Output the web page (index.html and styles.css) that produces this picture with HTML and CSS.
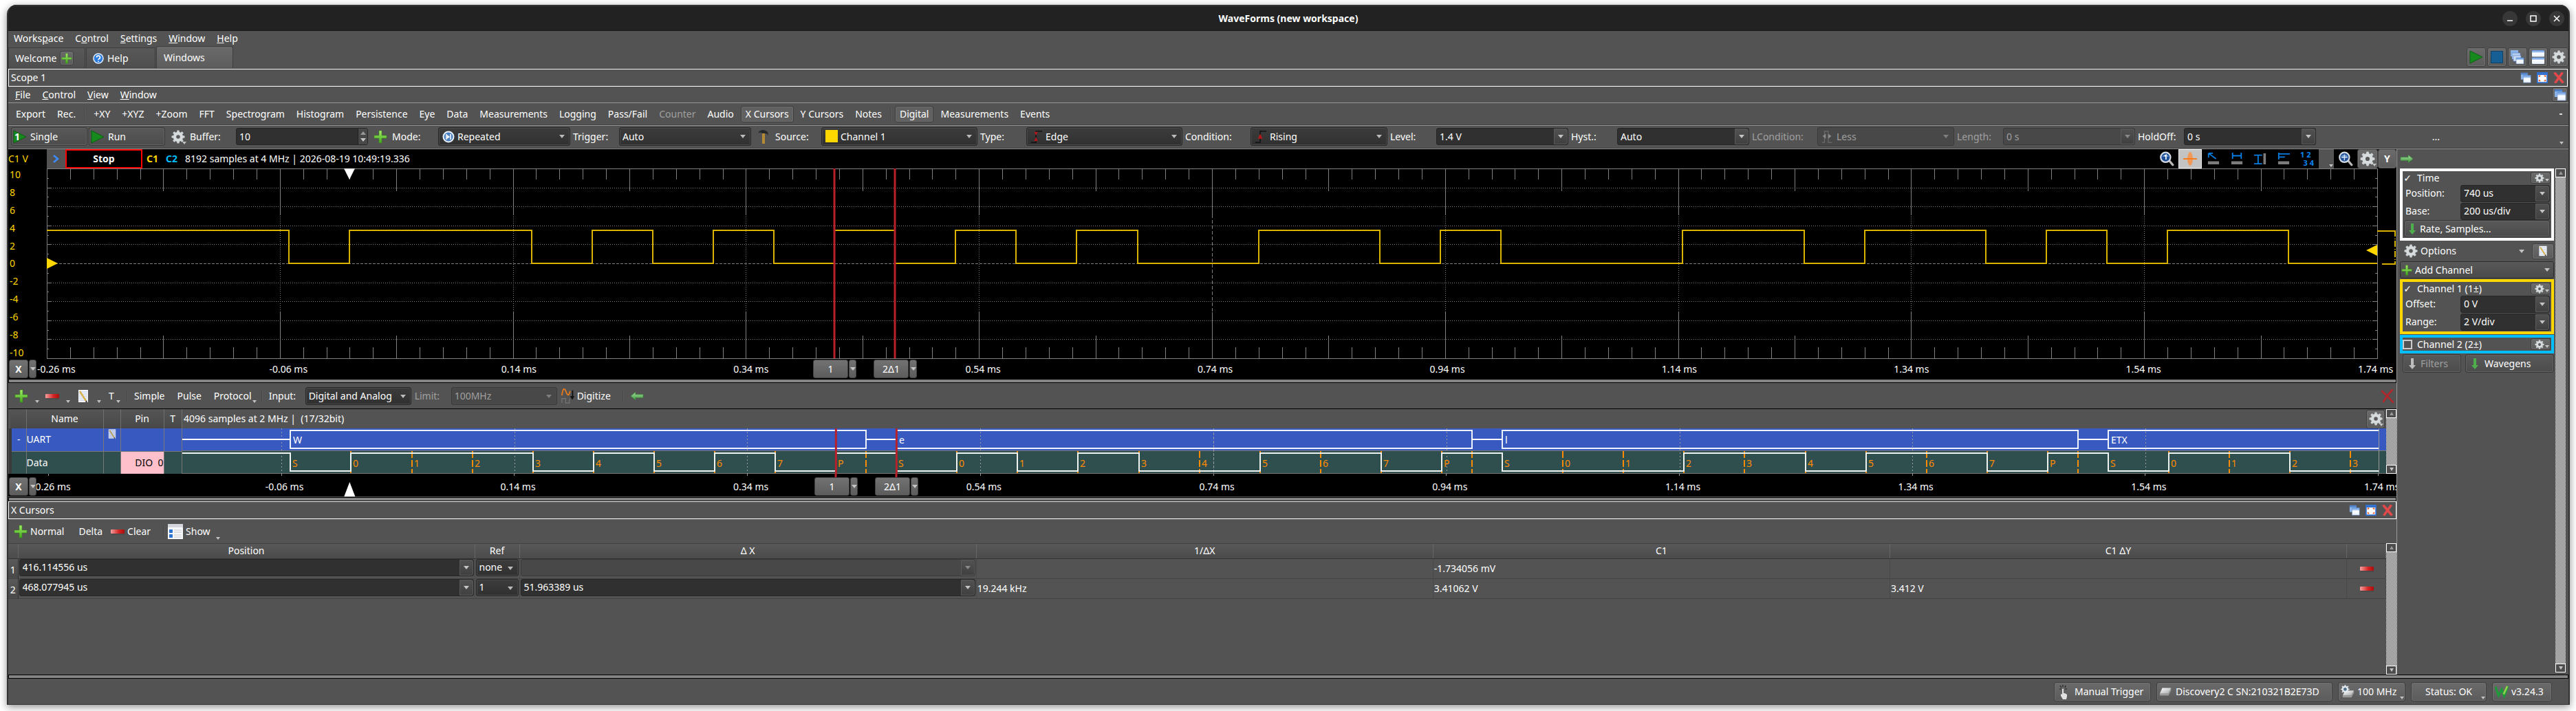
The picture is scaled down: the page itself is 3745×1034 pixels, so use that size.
FILE: index.html
```
<!DOCTYPE html>
<html lang="en">
<head>
    <meta charset="UTF-8">
    <meta name="viewport" content="width=device-width, initial-scale=1.0">
    <title>WaveForms (new workspace)</title>
    <link rel="stylesheet" href="styles.css">
</head>
<body>

<!-- Icon set -->
<svg class="defs" width="0" height="0" aria-hidden="true">
    <defs>
        <linearGradient id="gGreen" x1="0" y1="0" x2="0" y2="1"><stop offset="0" stop-color="#a6ef6a"/><stop offset="1" stop-color="#3fa51c"/></linearGradient>
        <linearGradient id="gRed" x1="0" y1="0" x2="1" y2="0"><stop offset="0" stop-color="#f6a0a0"/><stop offset=".6" stop-color="#d32222"/><stop offset="1" stop-color="#a80f0f"/></linearGradient>
        <linearGradient id="gBlue" x1="0" y1="0" x2="0" y2="1"><stop offset="0" stop-color="#5f93dc"/><stop offset=".35" stop-color="#b5d0f5"/><stop offset=".4" stop-color="#fff"/><stop offset="1" stop-color="#e6efff"/></linearGradient>
        <linearGradient id="gArrow" x1="0" y1="0" x2="0" y2="1"><stop offset="0" stop-color="#a5dfa0"/><stop offset="1" stop-color="#3f9a3c"/></linearGradient>
        <linearGradient id="gGrey" x1="0" y1="0" x2="1" y2="1"><stop offset="0" stop-color="#fff"/><stop offset="1" stop-color="#a3a8aa"/></linearGradient>
    </defs>
    <symbol id="plus" viewBox="0 0 20 20"><path d="M8 1h4v7h7v4h-7v7H8v-7H1V8h7z" fill="url(#gGreen)" stroke="#3c8a20" stroke-width=".6"/></symbol>
    <symbol id="minus" viewBox="0 0 20 20"><rect x="0" y="7" width="20" height="6" rx="1" fill="url(#gRed)"/><path d="M1 14h19" stroke="#333" stroke-opacity=".5"/></symbol>
    <symbol id="gear" viewBox="0 0 20 20"><g fill="#cdd2d4"><rect x="8.2" y=".5" width="3.6" height="19" rx="1"/><rect x="8.2" y=".5" width="3.6" height="19" rx="1" transform="rotate(45 10 10)"/><rect x="8.2" y=".5" width="3.6" height="19" rx="1" transform="rotate(90 10 10)"/><rect x="8.2" y=".5" width="3.6" height="19" rx="1" transform="rotate(135 10 10)"/></g><circle cx="10" cy="10" r="5" fill="#5a5a5a" stroke="#d6dbdd" stroke-width="4.400"/></symbol>
    <symbol id="note" viewBox="0 0 16 20"><path d="M1 1h14v18H1z" fill="#f4f6fb"/><path d="M2 4h12M2 7h12M2 10h12M2 13h12M2 16h12" stroke="#b9c9e6"/><path d="M3 3l9 14" stroke="#d8b24a" stroke-width="2.4"/><path d="M12 17l1 2" stroke="#333" stroke-width="2"/></symbol>
    <symbol id="zoomer" viewBox="0 0 20 20"><path d="M13 12l5 6" stroke="#b9b9b9" stroke-width="3" stroke-linecap="round"/><circle cx="8.500" cy="8" r="6.500" fill="#1f4f96" stroke="#d5dbe3" stroke-width="2"/><path d="M4 7a5 4 0 0 1 9 0z" fill="#6fa0dc"/></symbol>
    <symbol id="one" viewBox="0 0 20 20"><path d="M7 6.500L9 5v6" fill="none" stroke="#fff" stroke-width="1.500"/></symbol>
    <symbol id="fit" viewBox="0 0 20 20"><path d="M4.500 8h8M8.500 4v8" stroke="#cfe0f7" stroke-width="1.300"/></symbol>
    <symbol id="windows" viewBox="0 0 18 18"><rect x="1" y="1" width="11" height="11" fill="#8db4e8"/><rect x="1" y="1" width="11" height="3" fill="#4f82c8"/><rect x="5" y="5" width="12" height="12" fill="url(#gBlue)" stroke="#6d96d0" stroke-width=".6"/></symbol>
    <symbol id="cascade" viewBox="0 0 20 20"><rect x="0" y="0" width="11" height="9" fill="#8db4e8"/><rect x="2" y="4" width="12" height="9" fill="#b4cdf0" stroke="#5580c0" stroke-width=".6"/><rect x="4" y="8" width="11" height="8" fill="#cbdcf5" stroke="#5580c0" stroke-width=".6"/><rect x="8" y="11" width="11" height="9" fill="url(#gBlue)" stroke="#5580c0" stroke-width=".6"/></symbol>
    <symbol id="tile" viewBox="0 0 20 20"><rect x="1" y="0" width="18" height="9.500" rx="1" fill="url(#gBlue)"/><rect x="1" y="10.500" width="18" height="9.500" rx="1" fill="url(#gBlue)"/></symbol>
    <symbol id="maxi" viewBox="0 0 18 18"><rect x="1" y="1" width="16" height="16" fill="#fff" stroke="#2f6fd0" stroke-width="2"/><path d="M1 3h16" stroke="#2f6fd0" stroke-width="3"/><path d="M4 8V6h2M12 6h2v2M14 12v2h-2M6 14H4v-2" fill="none" stroke="#e2571c" stroke-width="1.600"/></symbol>
    <symbol id="cross" viewBox="0 0 18 18"><path d="M3 2l12 14M14 2L4 16" stroke="#e0484a" stroke-width="4" stroke-linecap="square"/></symbol>
    <symbol id="thinx" viewBox="0 0 20 20"><path d="M2 3c6 5 11 10 16 16M17 1C12 6 7 13 4 18" stroke="#b3262a" stroke-width="2.600" fill="none" stroke-linecap="round"/></symbol>
    <symbol id="play" viewBox="0 0 20 20"><path d="M1 1l18 9-18 9z" fill="#178a1e" stroke="#0d5f13"/></symbol>
    <symbol id="arrowR" viewBox="0 0 18 10"><path d="M1 3h10V0l6 5-6 5V7H1z" fill="url(#gArrow)" stroke="#3f9a3c" stroke-width=".5"/></symbol>
    <symbol id="arrowL" viewBox="0 0 18 10"><path d="M17 3H7V0L1 5l6 5V7h10z" fill="url(#gArrow)" stroke="#3f9a3c" stroke-width=".5"/></symbol>
    <symbol id="arrowD" viewBox="0 0 10 18"><path d="M3 1v10H0l5 6 5-6H7V1z" fill="currentColor"/></symbol>
    <symbol id="hammer" viewBox="0 0 16 22"><path d="M6 6h4v15H6z" fill="#b58a35"/><path d="M1 4c3-4 9-4 13 0l1 5c-2-3-4-3-5-3H6C4 4 3 4 1 6z" fill="#26292b"/></symbol>
    <symbol id="help" viewBox="0 0 16 16"><circle cx="8" cy="8" r="7" fill="#2c7bdc" stroke="#dbe9fb" stroke-width="1.600"/><path d="M5.500 6.500a2.500 2.300 0 1 1 3.500 2q-1 .5-1 1.500M8 11.500v1.500" fill="none" stroke="#fff" stroke-width="1.700"/></symbol>
    <symbol id="repeat" viewBox="0 0 18 18"><circle cx="9" cy="9" r="8.500" fill="#e8eff8"/><circle cx="9" cy="9" r="6.500" fill="#4a7fc0"/><path d="M6 5v8M12 5v8" stroke="#fff" stroke-width="1.500"/><path d="M7 6l4 3-4 3z" fill="#fff"/></symbol>
    <symbol id="edge" viewBox="0 0 20 20"><path d="M1 19h8V1h10" fill="none" stroke="#0b0b0b" stroke-width="1.500"/><path d="M6 2h6l-3 6zM6 17h6l-3-7z" fill="#b0181c"/></symbol>
    <symbol id="rising" viewBox="0 0 20 20"><path d="M1 19h8V1h10" fill="none" stroke="#0b0b0b" stroke-width="1.500"/><path d="M5 13h8L9 5z" fill="#b0181c"/></symbol>
    <symbol id="less" viewBox="0 0 20 20"><path d="M1 19h4V1h6v18h6" fill="none" stroke="#6c6c6c" stroke-width="1.300"/><path d="M2 9l5-4v8zM16 9l-5-4v8z" fill="#8b8b8b"/></symbol>
    <symbol id="digitize" viewBox="0 0 22 24"><path d="M1 11C3-2 5-2 8 6s5 3 6-2" fill="none" stroke="#e87b1d" stroke-width="2"/><path d="M1 23v-7h6v7h6v-7" fill="none" stroke="#777" stroke-width="1.200"/><path d="M18 3v10" stroke="#111" stroke-width="2"/><path d="M14 12h7l-3.500 6z" fill="#111"/></symbol>
    <symbol id="list" viewBox="0 0 22 22"><path d="M0 0h22v22H0z" fill="#f7f8fa"/><path d="M0 0h22v5H0z" fill="#d3d6da"/><path d="M2 8h5v5H2zM2 15h5v5H2z" fill="#2f74d0"/><path d="M9 9h11M9 12h11M9 16h11M9 19h11" stroke="#c5c8cc"/></symbol>
    <symbol id="hand" viewBox="0 0 16 22"><path d="M6 1v3M2 2l2 3M10 2L9 5M1 7h3M9 7h3" stroke="#222" stroke-width="1.200"/><path d="M5 7q1.200-1 2 0v6q3 0 5 2v3l-1 4H6l-3-5v-3l2 1z" fill="#e2e2e2"/></symbol>
    <symbol id="disk" viewBox="0 0 22 14"><path d="M5 1h14l-4 9H1z" fill="url(#gGrey)"/><path d="M1 10h14v3H1zM15 10l4-9v4l-4 8z" fill="#9b9b9b"/></symbol>
    <symbol id="clock" viewBox="0 0 22 22"><path d="M7 9h14l-4 8H3z" fill="url(#gGrey)"/><path d="M3 17h14v3H3zM17 17l4-8v4l-4 7z" fill="#9b9b9b"/><circle cx="7" cy="7" r="4" fill="#4f6f8a" stroke="#e3eaf0" stroke-width="2.600"/><path d="M7 0v3M7 11v3M0 7h3M11 7h3M2 2l2 2M12 2l-2 2M2 12l2-2M12 12l-2-2" stroke="#e3eaf0" stroke-width="1.600"/></symbol>
    <symbol id="wlogo" viewBox="0 0 22 20"><path d="M1 2l5 14 5-10 4 11 6-16" fill="none" stroke="#1d9a3a" stroke-width="3.400"/><path d="M14 14l6-13" stroke="#8fd14a" stroke-width="3"/></symbol>
    <symbol id="ptr" viewBox="0 0 20 20"><path d="M2 1l12 9M2 1v7M2 1h7" stroke="#0a7de0" stroke-width="2" fill="none"/><path d="M1 14h18v5H1z" fill="#7d7d7d"/></symbol>
    <symbol id="hcur" viewBox="0 0 20 20"><path d="M3 0v10M17 0v10M3 5h14" stroke="#0a7de0" stroke-width="2" fill="none"/><path d="M1 14h18v5H1z" fill="#7d7d7d"/></symbol>
    <symbol id="vcur" viewBox="0 0 20 20"><path d="M0 4h13M0 18h13M6.500 4v14" stroke="#0a7de0" stroke-width="2" fill="none"/><path d="M15 1h4v18h-4z" fill="#7d7d7d"/></symbol>
    <symbol id="fcur" viewBox="0 0 20 20"><path d="M2 0v11M2 2h18M2 7h10" stroke="#0a7de0" stroke-width="2" fill="none"/><path d="M1 14h18v5H1z" fill="#7d7d7d"/></symbol>
</svg>

<div class="window">

    <header class="titlebar">
        <h1>WaveForms (new workspace)</h1>
        <div class="wm-buttons">
            <button aria-label="Minimize"><svg viewBox="0 0 22 22"><path d="M7 14h8" stroke="#fff" stroke-width="1.500"/></svg></button>
            <button aria-label="Maximize"><svg viewBox="0 0 22 22"><path d="M7 7h8v8H7z" fill="none" stroke="#fff" stroke-width="1.500"/></svg></button>
            <button aria-label="Close"><svg viewBox="0 0 22 22"><path d="M7 7l8 8M15 7l-8 8" stroke="#fff" stroke-width="1.500"/></svg></button>
        </div>
    </header>

    <nav class="menu">
        <button>Works<u>p</u>ace</button>
        <button>C<u>o</u>ntrol</button>
        <button><u>S</u>ettings</button>
        <button><u>W</u>indow</button>
        <button><u>H</u>elp</button>
    </nav>

    <div class="tabs">
        <div class="tab tab-welcome"><span>Welcome</span><button class="tool-btn tab-add" aria-label="Add"><svg class="i16"><use href="#plus"/></svg></button></div>
        <button class="tab tab-help"><svg class="i16"><use href="#help"/></svg>Help</button>
        <button class="tab tab-active">Windows</button>
        <div class="tab-tools">
            <button class="tool-btn" aria-label="Run all"><svg class="i20"><use href="#play"/></svg></button>
            <button class="tool-btn" aria-label="Stop all"><span class="stop-icon"></span></button>
            <button class="tool-btn" aria-label="Cascade"><svg class="i20"><use href="#cascade"/></svg></button>
            <button class="tool-btn" aria-label="Tile"><svg class="i20"><use href="#tile"/></svg></button>
            <button class="tool-btn" aria-label="Settings"><svg class="i20"><use href="#gear"/></svg></button>
        </div>
    </div>

    <div class="dock-title">
        <h2>Scope 1</h2>
        <button aria-label="Undock"><svg class="i16"><use href="#windows"/></svg></button>
        <button aria-label="Maximize"><svg class="i16"><use href="#maxi"/></svg></button>
        <button aria-label="Close"><svg class="i16"><use href="#cross"/></svg></button>
    </div>

    <nav class="menu menu-scope">
        <button><u>F</u>ile</button>
        <button><u>C</u>ontrol</button>
        <button><u>V</u>iew</button>
        <button><u>W</u>indow</button>
        <button class="tool-btn undock" aria-label="Float"><svg class="i18"><use href="#windows"/></svg></button>
    </nav>

    <div class="toolbar view-bar">
        <button>Export</button>
        <button>Rec.</button>
        <i class="sep"></i>
        <button>+XY</button>
        <button>+XYZ</button>
        <button>+Zoom</button>
        <button>FFT</button>
        <button>Spectrogram</button>
        <button>Histogram</button>
        <button>Persistence</button>
        <button>Eye</button>
        <button>Data</button>
        <button>Measurements</button>
        <button>Logging</button>
        <button>Pass/Fail</button>
        <button disabled>Counter</button>
        <button>Audio</button>
        <button class="on">X Cursors</button>
        <button>Y Cursors</button>
        <button>Notes</button>
        <i class="sep"></i>
        <button class="on">Digital</button>
        <button>Measurements</button>
        <button>Events</button>
        <i class="more"></i>
    </div>

    <div class="toolbar trigger-bar">
        <button class="btn"><svg class="i20"><use href="#play"/></svg><b class="single">1</b>Single</button>
        <button class="btn"><svg class="i20"><use href="#play"/></svg>Run</button>
        <button class="flat" aria-label="Options"><svg class="i20"><use href="#gear"/></svg><i class="caret corner"></i></button>
        <label for="buffer">Buffer:</label>
        <span class="spin"><input id="buffer" value="10"><span class="arrows"><i class="caret up"></i><i class="caret"></i></span></span>
        <button class="flat" aria-label="Add buffer"><svg class="i20"><use href="#plus"/></svg></button>
        <label for="mode">Mode:</label>
        <span class="drop has-icon"><svg class="i18"><use href="#repeat"/></svg><select id="mode"><option>Repeated</option></select></span>
        <label for="trigger">Trigger:</label>
        <span class="drop"><select id="trigger"><option>Auto</option></select></span>
        <button class="flat" aria-label="Simple trigger"><svg class="i22"><use href="#hammer"/></svg></button>
        <label for="source">Source:</label>
        <span class="drop wide has-icon"><span class="swatch"></span><select id="source"><option>Channel 1</option></select></span>
        <label for="type">Type:</label>
        <span class="drop wide has-icon"><svg class="i18"><use href="#edge"/></svg><select id="type"><option>Edge</option></select></span>
        <label for="condition" class="long">Condition:</label>
        <span class="drop mid has-icon"><svg class="i18"><use href="#rising"/></svg><select id="condition"><option>Rising</option></select></span>
        <label for="level">Level:</label>
        <span class="combo"><input id="level" value="1.4 V"><button aria-label="Level list"><i class="caret"></i></button></span>
        <label for="hyst">Hyst.:</label>
        <span class="combo"><input id="hyst" value="Auto"><button aria-label="Hysteresis list"><i class="caret"></i></button></span>
        <label for="lcond" class="long off">LCondition:</label>
        <span class="drop mid has-icon off"><svg class="i18"><use href="#less"/></svg><select id="lcond" disabled><option>Less</option></select></span>
        <label for="length" class="off">Length:</label>
        <span class="combo off"><input id="length" value="0 s" disabled><button disabled aria-label="Length list"><i class="caret"></i></button></span>
        <label for="holdoff">HoldOff:</label>
        <span class="combo"><input id="holdoff" value="0 s"><button aria-label="HoldOff list"><i class="caret"></i></button></span>
        <span class="dots">...</span>
        <i class="caret tail"></i>
    </div>

    <main class="work">
        <div class="left">

            <section class="scope">
                <div class="scope-head">
                    <span class="axis-unit">C1 V</span>
                    <button class="chevron" aria-label="Expand"><svg viewBox="0 0 12 12"><path d="M2 1l6 5-6 5" fill="none" stroke="#3b8cff" stroke-width="2.500"/></svg></button>
                    <span class="state">Stop</span>
                    <b class="c1">C1</b>
                    <b class="c2">C2</b>
                    <span>8192 samples at 4 MHz | 2026-08-19 10:49:19.336</span>
                    <div class="scope-tools">
                        <button aria-label="Zoom 1:1"><svg class="i22"><use href="#zoomer"/><use href="#one"/></svg></button>
                        <button class="hot" aria-label="Hot track"><svg class="i22"><ellipse cx="11" cy="11" rx="4" ry="10" fill="#f09a5c"/><path d="M1 11h20" stroke="#f57c1f" stroke-width="2"/></svg></button>
                        <button aria-label="Pointer"><svg class="i18"><use href="#ptr"/></svg></button>
                        <button aria-label="Horizontal cursor"><svg class="i18"><use href="#hcur"/></svg></button>
                        <button aria-label="Vertical cursor"><svg class="i18"><use href="#vcur"/></svg></button>
                        <button aria-label="Pulse"><svg class="i18"><use href="#fcur"/></svg></button>
                        <button class="digits"><span>1 2</span><span>3 4</span></button>
                        <button class="grip" aria-label="More"><i class="caret corner"></i></button>
                        <button aria-label="Fit"><svg class="i22"><use href="#zoomer"/><use href="#fit"/></svg></button>
                        <button class="tool-btn gear-btn" aria-label="Plot options"><svg class="i22"><use href="#gear"/></svg><i class="caret corner"></i></button>
                        <button class="tool-btn y-btn">Y</button>
                    </div>
                </div>
                <div class="scope-body">
                    <div class="y-labels">
                        <span>10</span><span>8</span><span>6</span><span>4</span><span>2</span><span>0</span><span>-2</span><span>-4</span><span>-6</span><span>-8</span><span>-10</span>
                    </div>
                    <svg id="scopePlot" class="scope-plot"></svg>
                </div>
                <div class="x-axis" id="scopeAxis">
                    <svg></svg>
                    <div class="axis-btn"><button>X</button><button aria-label="X menu"><i class="caret"></i></button></div>
                    <div class="axis-btn cursor" data-t="0.416114"><button>1</button><button aria-label="Cursor 1 menu"><i class="caret"></i></button></div>
                    <div class="axis-btn cursor" data-t="0.468078"><button>2Δ1</button><button aria-label="Cursor 2 menu"><i class="caret"></i></button></div>
                </div>
            </section>

            <div class="splitter"></div>

            <section class="digital">
                <div class="toolbar digital-bar">
                    <button class="drop-tool" aria-label="Add"><svg class="i20"><use href="#plus"/></svg><i class="caret corner"></i></button>
                    <button class="drop-tool" aria-label="Remove"><svg class="i20"><use href="#minus"/></svg><i class="caret corner"></i></button>
                    <button class="drop-tool" aria-label="Edit"><svg class="i20"><use href="#note"/></svg><i class="caret corner"></i></button>
                    <button class="drop-tool narrow">T<i class="caret corner"></i></button>
                    <i class="sep"></i>
                    <button>Simple</button>
                    <button>Pulse</button>
                    <button class="protocol">Protocol<i class="caret corner"></i></button>
                    <i class="sep"></i>
                    <label for="input">Input:</label>
                    <span class="drop small"><select id="input"><option>Digital and Analog</option></select></span>
                    <label for="limit" class="off">Limit:</label>
                    <span class="drop small off"><select id="limit" disabled><option>100MHz</option></select></span>
                    <button class="digitize"><svg class="i22"><use href="#digitize"/></svg>Digitize</button>
                    <i class="sep"></i>
                    <button aria-label="Back"><svg class="i20"><use href="#arrowL"/></svg></button>
                    <button class="close-x" aria-label="Close"><svg class="i20"><use href="#thinx"/></svg></button>
                </div>
                <div class="digital-body">
                    <div class="digital-main">
                        <div class="digital-rows">
                            <table class="signals">
                                <thead>
                                    <tr><th class="w-exp"></th><th class="w-name">Name</th><th class="w-ico"></th><th class="w-pin">Pin</th><th class="w-t">T</th></tr>
                                </thead>
                                <tbody>
                                    <tr class="uart"><td>-</td><td class="name">UART</td><td><svg class="i-note"><use href="#note"/></svg></td><td></td><td></td></tr>
                                    <tr class="data"><td></td><td class="name">Data</td><td></td><td class="pin">DIO&nbsp; 0</td><td></td></tr>
                                </tbody>
                            </table>
                            <div class="digital-view">
                                <div class="digital-info"><span>4096 samples at 2 MHz |&nbsp; (17/32bit)</span><button class="tool-btn" aria-label="Digital options"><svg class="i20"><use href="#gear"/></svg><i class="caret corner"></i></button></div>
                                <svg id="digitalPlot" class="digital-plot"></svg>
                            </div>
                        </div>
                        <div class="scroll"><i><b class="caret up"></b></i><i><b class="caret"></b></i></div>
                    </div>
                    <div class="x-axis low" id="digitalAxis">
                        <svg></svg>
                        <div class="axis-btn"><button>X</button><button aria-label="X menu"><i class="caret"></i></button></div>
                        <div class="axis-btn cursor" data-t="0.416114"><button>1</button><button aria-label="Cursor 1 menu"><i class="caret"></i></button></div>
                        <div class="axis-btn cursor" data-t="0.468078"><button>2Δ1</button><button aria-label="Cursor 2 menu"><i class="caret"></i></button></div>
                    </div>
                </div>
            </section>

            <div class="splitter"></div>

            <section class="cursors">
                <div class="dock-title">
                    <h2>X Cursors</h2>
                    <button aria-label="Undock"><svg class="i16"><use href="#windows"/></svg></button>
                    <button aria-label="Maximize"><svg class="i16"><use href="#maxi"/></svg></button>
                    <button aria-label="Close"><svg class="i16"><use href="#cross"/></svg></button>
                </div>
                <div class="toolbar cursor-bar">
                    <button><svg class="i20"><use href="#plus"/></svg>Normal</button>
                    <button class="delta">Delta</button>
                    <button><svg class="i20"><use href="#minus"/></svg>Clear</button>
                    <i class="sep"></i>
                    <button class="show"><svg class="i22"><use href="#list"/></svg>Show<i class="caret corner"></i></button>
                </div>
                <div class="cursor-grid">
                    <div class="cursor-scroll">
                        <table class="cursor-table">
                            <thead>
                                <tr><th class="w-row"></th><th class="w-pos">Position</th><th class="w-ref">Ref</th><th>Δ X</th><th>1/ΔX</th><th>C1</th><th>C1 ΔY</th><th class="w-del"></th></tr>
                            </thead>
                            <tbody>
                                <tr>
                                    <th>1</th>
                                    <td><span class="combo"><input aria-label="Position 1" value="416.114556 us"><button aria-label="List"><i class="caret"></i></button></span></td>
                                    <td><span class="drop"><select aria-label="Reference 1"><option>none</option></select></span></td>
                                    <td><span class="combo off"><input aria-label="Delta 1" value="" disabled><button disabled aria-label="List"><i class="caret"></i></button></span></td>
                                    <td></td><td>-1.734056 mV</td><td></td>
                                    <td class="del"><button aria-label="Delete cursor 1"><svg class="i20"><use href="#minus"/></svg></button></td>
                                </tr>
                                <tr>
                                    <th>2</th>
                                    <td><span class="combo"><input aria-label="Position 2" value="468.077945 us"><button aria-label="List"><i class="caret"></i></button></span></td>
                                    <td><span class="drop"><select aria-label="Reference 2"><option>1</option></select></span></td>
                                    <td><span class="combo"><input aria-label="Delta 2" value="51.963389 us"><button aria-label="List"><i class="caret"></i></button></span></td>
                                    <td>19.244 kHz</td><td>3.41062 V</td><td>3.412 V</td>
                                    <td class="del"><button aria-label="Delete cursor 2"><svg class="i20"><use href="#minus"/></svg></button></td>
                                </tr>
                            </tbody>
                        </table>
                    </div>
                    <div class="scroll"><i><b class="caret up"></b></i><i><b class="caret"></b></i></div>
                </div>
            </section>
        </div>

        <aside class="panel">
            <div class="panel-top"><svg class="i20"><use href="#arrowR"/></svg></div>
            <div class="panel-body">
                <div class="panel-list">
                    <fieldset class="group time">
                        <div class="group-head"><label><input type="checkbox" checked>Time</label><button class="tool-btn mini" aria-label="Time options"><svg class="i16"><use href="#gear"/></svg><i class="caret corner"></i></button></div>
                        <div class="field"><label for="position">Position:</label><span class="combo"><input id="position" value="740 us"><button aria-label="Position list"><i class="caret"></i></button></span></div>
                        <div class="field"><label for="base">Base:</label><span class="combo"><input id="base" value="200 us/div"><button aria-label="Base list"><i class="caret"></i></button></span></div>
                        <button class="btn rate"><svg class="i-down"><use href="#arrowD"/></svg>Rate, Samples...</button>
                    </fieldset>
                    <div class="options-row">
                        <button class="options"><svg class="i20"><use href="#gear"/></svg>Options<i class="caret"></i></button>
                        <button class="tool-btn" aria-label="Notes"><svg class="i16"><use href="#note"/></svg></button>
                    </div>
                    <button class="add-channel"><svg class="i16"><use href="#plus"/></svg>Add Channel<i class="caret"></i></button>
                    <fieldset class="group ch1">
                        <div class="group-head"><label><input type="checkbox" checked>Channel 1 (1±)</label><button class="tool-btn mini" aria-label="Channel 1 options"><svg class="i16"><use href="#gear"/></svg><i class="caret corner"></i></button></div>
                        <div class="field"><label for="offset">Offset:</label><span class="combo"><input id="offset" value="0 V"><button aria-label="Offset list"><i class="caret"></i></button></span></div>
                        <div class="field"><label for="range">Range:</label><span class="combo"><input id="range" value="2 V/div"><button aria-label="Range list"><i class="caret"></i></button></span></div>
                    </fieldset>
                    <fieldset class="group ch2">
                        <div class="group-head"><label><input type="checkbox">Channel 2 (2±)</label><button class="tool-btn mini" aria-label="Channel 2 options"><svg class="i16"><use href="#gear"/></svg><i class="caret corner"></i></button></div>
                    </fieldset>
                    <div class="pair">
                        <button class="btn filters" disabled><svg class="i-down"><use href="#arrowD"/></svg>Filters</button>
                        <button class="btn wavegens"><svg class="i-down"><use href="#arrowD"/></svg>Wavegens</button>
                    </div>
                </div>
                <div class="scroll"><i><b class="caret up"></b></i><i><b class="caret"></b></i></div>
            </div>
        </aside>
    </main>

    <div class="splitter"></div>

    <footer class="status">
        <button class="tool-btn manual"><svg class="i22"><use href="#hand"/></svg>Manual Trigger</button>
        <button class="tool-btn device"><svg class="i20"><use href="#disk"/></svg>Discovery2 C SN:210321B2E73D</button>
        <button class="tool-btn clock"><svg class="i20"><use href="#clock"/></svg>100 MHz<i class="caret corner"></i></button>
        <button class="tool-btn state-ok">Status: OK<i class="caret corner"></i></button>
        <button class="tool-btn version"><svg class="i20"><use href="#wlogo"/></svg>v3.24.3</button>
    </footer>
</div>

<script src="script.js"></script>
</body>
</html>
```

FILE: styles.css
```
* {
    box-sizing: border-box;
}

body {
    margin: 0;
    height: 100vh;
    padding: 7px 9px 9px 10px;
    background: #fff;
    color: #fff;
    font: 14px/20px "Noto Sans", "Open Sans", sans-serif;
    display: flex;
}

button, input, select {
    font: inherit;
    color: inherit;
    margin: 0;
    padding: 0;
    border: 0;
    background: none;
}

button {
    position: relative;
    display: inline-flex;
    align-items: center;
    white-space: nowrap;
}

h1, h2 {
    margin: 0;
    font-size: 14px;
    line-height: 20px;
}

h2 {
    font-weight: normal;
    flex: 1;
}

label {
    white-space: nowrap;
}

svg {
    display: block;
    flex: none;
}

.defs {
    position: absolute;
}

.i16 { width: 16px; height: 16px; }
.i18 { width: 18px; height: 20px; }
.i20 { width: 20px; height: 20px; }
.i22 { width: 22px; height: 22px; }
.i-down { width: 10px; height: 18px; color: #4fae4c; }
.i-note { width: 12px; height: 16px; margin: -16px auto 0; opacity: .8; }

/* Window frame */
.window {
    flex: 1;
    min-width: 0;
    display: flex;
    flex-direction: column;
    background: #535353;
    border: solid #333;
    border-width: 0 2px 1px;
    border-radius: 14px 14px 0 0;
    box-shadow: 0 3px 12px rgba(0, 0, 0, .45);
    overflow: hidden;
}

.titlebar {
    position: relative;
    height: 38px;
    display: flex;
    align-items: center;
    justify-content: center;
    background: #222;
    border-top: 2px solid #333;
    border-bottom: 1px solid #181818;
}

.wm-buttons {
    position: absolute;
    right: 6px;
    display: flex;
    gap: 12px;
}

.wm-buttons button {
    width: 22px;
    height: 22px;
    border-radius: 50%;
    background: #373737;
}

.wm-buttons svg {
    width: 22px;
}

/* Menus and tabs */
.menu {
    display: flex;
    align-items: center;
    gap: 17px;
    height: 22px;
    padding: 0 8px;
    flex: none;
}

.menu-scope {
    height: 24px;
    padding: 0 1px 0 10px;
    border-bottom: 1px solid #949494;
}

.undock {
    margin-left: auto;
    width: 23px;
    height: 21px;
}

.tabs {
    display: flex;
    align-items: flex-end;
    height: 33px;
    border-bottom: 1px solid #414141;
    gap: 1px;
    flex: none;
}

.tab {
    display: flex;
    align-items: center;
    height: 30px;
    padding-left: 9px;
    gap: 5px;
    border: 1px solid #3e3e3e;
    border-bottom: 0;
    background: linear-gradient(#585858, #4e4e4e);
    width: 101px;
}

.tab-welcome { width: 112px; }

.tab-add {
    width: 20px;
    height: 21px;
}

.tab.tab-active {
    height: 32px;
    width: 112px;
    padding-left: 10px;
    background: linear-gradient(#6a6a6a, #5d5d5d);
    border-radius: 3px 3px 0 0;
}

.tab-tools {
    margin-left: auto;
    display: flex;
    gap: 2px;
    padding-bottom: 2px;
}

.tool-btn {
    justify-content: center;
    border: 1px solid #404040;
    border-radius: 3px;
    background: linear-gradient(#6b6b6b, #5b5b5b);
    box-shadow: inset 0 0 0 1px #6f6f6f;
}

.tab-tools .tool-btn {
    width: 28px;
    height: 28px;
}

.stop-icon {
    width: 18px;
    height: 18px;
    background: #155f94;
    border: 1px solid #0d4268;
}

.dock-title {
    display: flex;
    align-items: center;
    gap: 8px;
    height: 26px;
    padding: 0 4px 0 3px;
    border: 1px solid #fff;
    flex: none;
}

.window > .dock-title {
    margin-right: 1px;
}

/* Toolbars */
.toolbar {
    display: flex;
    align-items: center;
    white-space: nowrap;
    flex: none;
}

.sep {
    width: 2px;
    height: 18px;
    border-left: 1px solid #494949;
    border-right: 1px solid #5b5b5b;
}

.caret {
    display: block;
    border: solid transparent;
    border-width: 5px 4px 0;
    border-top-color: #c4c4c4;
}

.caret.up {
    border-width: 0 4px 5px;
    border-bottom-color: #999;
}

.corner {
    position: absolute;
    right: 1px;
    bottom: 2px;
    border-width: 4px 3px 0;
}

.view-bar {
    height: 33px;
    gap: 3px;
    padding: 0 9px 0 4px;
    border-bottom: 1px solid #949494;
    box-shadow: inset 0 -1px #414141;
}

.view-bar button {
    height: 24px;
    padding: 0 6px;
    border: 1px solid transparent;
    border-radius: 3px;
}

.view-bar .sep {
    margin: 0 2px;
}

.view-bar .on {
    border-color: #3e3e3e;
    background: #616161;
    box-shadow: inset 0 0 0 1px #6d6d6d;
}

button:disabled, .off {
    color: #a0a0a0;
}

.more {
    margin-left: auto;
    width: 4px;
    height: 2px;
    background: #ddd;
}

.trigger-bar {
    height: 34px;
    gap: 4px;
    padding: 0 7px 2px 4px;
    border-bottom: 1px solid #8e8e8e;
    box-shadow: inset 0 -1px #414141;
}

.btn {
    width: 111px;
    height: 27px;
    gap: 5px;
    padding-left: 2px;
    border: 1px solid #393939;
    border-radius: 3px;
    background: linear-gradient(#595959, #4c4c4c);
    box-shadow: inset 0 0 0 1px #616161;
}

.trigger-bar .btn + .btn {
    margin-left: -2px;
}

.single {
    position: absolute;
    left: 4px;
}

.flat {
    justify-content: center;
    width: 27px;
    height: 26px;
}

.trigger-bar .btn + .flat {
    margin-left: 1px;
}

.trigger-bar label {
    width: 63px;
    flex: none;
}

.trigger-bar .long {
    width: 91px;
}

.drop, .combo, .spin {
    position: relative;
    display: flex;
    width: 192px;
    height: 25px;
    border: 1px solid #262626;
    border-radius: 3px;
    background: #303030;
    flex: none;
}

.drop {
    height: 27px;
    background: linear-gradient(#3c3c3c, #303030);
    box-shadow: inset 0 0 0 1px #4a4a4a;
}

.drop select {
    appearance: none;
    width: 100%;
    padding: 0 16px 0 4px;
    opacity: 1;
}

.drop::after {
    content: "";
    position: absolute;
    right: 7px;
    top: 10px;
    border: solid transparent;
    border-width: 5px 4px 0;
    border-top-color: #bbb;
    pointer-events: none;
}

.has-icon select {
    padding-left: 27px;
}

.has-icon svg, .swatch {
    position: absolute;
    left: 5px;
    top: 3px;
}

.swatch {
    width: 18px;
    height: 18px;
    background: #ffd700;
}

.wide { width: 227px; }
.mid { width: 199px; }

.combo input, .spin input {
    flex: 1;
    min-width: 0;
    padding: 0 4px;
}

.combo button {
    width: 20px;
    justify-content: center;
    background: linear-gradient(#515151, #404040);
    border: 1px solid #5a5a5a;
    border-radius: 0 3px 3px 0;
}

.combo.off, .drop.off {
    background: #484848;
    border-color: #393939;
}

.off .caret {
    border-top-color: #888;
}

.drop.off::after {
    border-top-color: #808080;
}

.arrows {
    display: flex;
    flex-direction: column;
    justify-content: space-evenly;
    align-items: center;
    width: 14px;
    background: #484848;
    border-left: 1px solid #222;
}

.dots {
    margin-left: auto;
}

.tail {
    margin: 18px 0 0 170px;
    border-width: 4px 3px 0;
}

/* Work area */
.work {
    flex: 1;
    min-height: 0;
    display: flex;
}

.left {
    flex: 1;
    min-width: 0;
    display: flex;
    flex-direction: column;
}

.splitter {
    height: 6px;
    background: #858585;
    border: 1px solid #000;
    flex: none;
}

.scope {
    background: #000;
}

.scope-head {
    display: flex;
    align-items: center;
    height: 28px;
}

.axis-unit {
    width: 56px;
    color: #ffd700;
}

.chevron {
    width: 27px;
    height: 28px;
    justify-content: center;
    background: #535353;
}

.chevron svg {
    width: 12px;
    height: 12px;
}

.state {
    width: 112px;
    height: 28px;
    border: 2px solid #f00;
    text-align: center;
    font-weight: bold;
    line-height: 24px;
}

.c1, .c2 {
    width: 29px;
    padding-left: 6px;
    color: #ffd700;
}

.c2 {
    width: 33px;
    color: #00bfff;
    padding-left: 5px;
}

.scope-tools {
    margin-left: auto;
    display: flex;
    align-items: center;
    height: 28px;
}

.scope-tools button {
    width: 34px;
    height: 28px;
    justify-content: center;
}

.scope-tools .hot {
    background: #c3c3c3;
    border: 1px solid #eee;
}

.scope-tools .digits {
    flex-direction: column;
    align-items: stretch;
    padding: 0 7px;
    color: #0a84f0;
    font-size: 11px;
    font-weight: bold;
    line-height: 12px;
}

.digits span + span {
    text-align: right;
}

.digits span:first-child {
    text-align: left;
}

.scope-tools .grip {
    width: 22px;
    background: #535353;
}

.scope-tools .gear-btn {
    width: 30px;
}

.scope-tools .y-btn {
    width: 27px;
    font-weight: bold;
}

.scope-body {
    display: flex;
    height: 277px;
}

.y-labels {
    width: 56px;
    padding-left: 2px;
    display: flex;
    flex-direction: column;
    justify-content: space-between;
    line-height: 18px;
    color: #ffd700;
}

.scope-plot {
    flex: 1;
    min-width: 0;
    height: 277px;
}

.x-axis {
    position: relative;
    height: 29px;
    background: #000;
    overflow: hidden;
}

.x-axis.low {
    height: 34px;
    border-bottom: 1px solid #555;
}

.x-axis > svg {
    width: 100%;
    height: 100%;
}

.x-axis text, .digital-plot text {
    fill: #fff;
}

.axis-btn {
    position: absolute;
    left: 1px;
    top: 1px;
    display: flex;
    gap: 1px;
}

.low .axis-btn {
    top: 5px;
}

.axis-btn button {
    width: 28px;
    height: 27px;
    justify-content: center;
    border: 1px solid #404040;
    border-radius: 3px;
    background: linear-gradient(#727272, #5c5c5c);
    font-weight: bold;
}

.axis-btn.cursor button {
    width: 51px;
    font-weight: normal;
}

.axis-btn button:last-child, .axis-btn.cursor button:last-child {
    width: 11px;
}

/* Digital */
.digital-bar {
    height: 38px;
    padding: 0 3px 0 9px;
    border-bottom: 1px solid #000;
}

.digital-bar button, .digital-bar label {
    margin-right: 8px;
    height: 24px;
    line-height: 24px;
}

.digital-bar .drop-tool {
    width: 37px;
}

.digital-bar .narrow {
    width: 20px;
    padding-left: 2px;
}

.digital-bar .sep {
    margin-right: 9px;
}

.digital-bar button + button {
    margin-left: 10px;
}

.digital-bar .drop-tool + .drop-tool {
    margin-left: 0;
}

.digital-bar .protocol {
    padding-right: 8px;
    margin-right: 6px;
}

.digital-bar label {
    width: 45px;
}

.drop.small {
    width: 154px;
    margin-right: 5px;
    height: 26px;
}

.digital-bar .digitize {
    margin-right: 17px;
    gap: 2px;
}

.digital-bar .close-x {
    margin: 0 0 0 auto;
}

.digital-main {
    display: flex;
    height: 94px;
}

.digital-rows {
    flex: 1;
    min-width: 0;
    display: flex;
}

.digital-info {
    display: flex;
    align-items: center;
    justify-content: space-between;
    height: 28px;
    padding: 0 2px;
}

.digital-info .tool-btn {
    width: 27px;
    height: 27px;
}

table {
    border-collapse: collapse;
    table-layout: fixed;
}

th, td {
    padding: 0;
    font-weight: normal;
}

.signals {
    width: 252px;
    margin-left: 1px;
    flex: none;
}

.signals th {
    height: 28px;
    border-right: 1px solid #6f6f6f;
    background: linear-gradient(#555, #484848);
}

.signals td {
    height: 33px;
    border-right: 1px solid #777;
    border-bottom: 1px solid #777;
    text-align: center;
}

.w-exp { width: 23px; }
.w-name { width: 112px; }
.w-ico { width: 25px; }
.w-pin { width: 63px; }

.uart { background: #3859c0; }
.data { background: #2f4f4f; }

.signals tbody td:first-child {
    border-left: 4px solid #3a3a3a;
}

.signals .name {
    text-align: left;
}

.signals .pin {
    background: #ffc0cb;
    color: #000;
    text-align: right;
}

.digital-view {
    flex: 1;
    min-width: 0;
}

.digital-plot {
    width: 100%;
    height: 66px;
    overflow: hidden;
}

.scroll {
    width: 15px;
    display: flex;
    flex-direction: column;
    justify-content: space-between;
    background: conic-gradient(#eee 25%, #5a5a5a 0 50%, #eee 0 75%, #5a5a5a 0) 0 0 / 2px 2px;
    flex: none;
}

.scroll > i {
    height: 13px;
    display: flex;
    align-items: center;
    justify-content: center;
    background: #4c4c4c;
    border: 1px solid #fff;
}

.scroll .caret {
    border-left-width: 3px;
    border-right-width: 3px;
}

/* Cursors */
.cursors {
    flex: 1;
    min-height: 0;
    display: flex;
    flex-direction: column;
}

.cursor-bar {
    height: 35px;
    padding-left: 8px;
}

.cursor-bar button {
    gap: 4px;
    height: 24px;
    margin-right: 14px;
}

.cursor-bar .delta {
    padding-left: 7px;
    margin-right: 12px;
}

.cursor-bar .sep {
    margin: 0 5px 0 4px;
}

.cursor-bar .show {
    padding-right: 15px;
}

.show .corner {
    bottom: 0;
}

.cursor-grid {
    flex: 1;
    min-height: 0;
    display: flex;
}

.cursor-scroll {
    flex: 1;
    min-width: 0;
    border-top: 1px solid #404040;
}

.cursor-table {
    width: 100%;
}

.cursor-table thead th {
    height: 21px;
    border-right: 1px solid #666;
    border-bottom: 1px solid #333;
    background: linear-gradient(#585858, #4b4b4b);
}

.cursor-table tbody th {
    background: linear-gradient(#5a5a5a, #484848);
    border-right: 1px solid #333;
    padding-top: 4px;
}

.cursor-table tbody tr {
    border-bottom: 1px solid #424242;
}

.cursor-table td {
    height: 29px;
    border-right: 1px solid #494949;
    padding-left: 1px;
}

.cursor-table .combo, .cursor-table .drop {
    width: auto;
    height: 25px;
    margin: -3px 1px 0 0;
}

.w-row { width: 14px; }
.w-pos { width: 664px; }
.w-ref { width: 65px; }
.w-del { width: 57px; }

.del button {
    display: flex;
    margin: 0 auto;
}

/* Side panel */
.panel {
    width: 250px;
    display: flex;
    flex-direction: column;
    border-left: 1px solid #9a9a9a;
    flex: none;
}

.panel-top {
    height: 28px;
    display: flex;
    align-items: center;
    padding-left: 4px;
}

.panel-body {
    flex: 1;
    min-height: 0;
    display: flex;
    justify-content: space-between;
    padding: 0 4px 3px;
}

.panel-list {
    width: 224px;
    display: flex;
    flex-direction: column;
    gap: 1px;
}

.group {
    min-width: 0;
    margin: 0;
    padding: 0 1px 1px;
    border: 4px solid #fff;
    display: flex;
    flex-direction: column;
}

.ch1 { border-color: #ffd700; }

.ch2 {
    border-color: #00bfff;
    padding-bottom: 0;
}

.group-head {
    display: flex;
    justify-content: space-between;
    align-items: center;
    height: 19px;
}

.group-head label {
    display: flex;
    align-items: center;
    gap: 7px;
}

.group-head input {
    appearance: none;
    width: 14px;
    height: 14px;
    margin-left: -1px;
    border: 2px solid #ccc;
}

.group-head input:checked {
    border: 0;
    display: grid;
    place-items: center;
}

.group-head input:checked::after {
    content: "✓";
    font: 14px/14px "DejaVu Sans", sans-serif;
}

.mini {
    width: 29px;
    height: 17px;
    padding-right: 3px;
}

.mini .i16 {
    width: 14px;
    height: 14px;
}

.field {
    display: flex;
    justify-content: space-between;
    align-items: center;
    height: 26px;
    padding: 0 1px 0 3px;
}

.field .combo {
    width: 130px;
}

.rate {
    width: auto;
    height: 25px;
    margin: 0 1px;
    padding-left: 6px;
    gap: 6px;
}

.options-row {
    display: flex;
    align-items: center;
    height: 28px;
    padding-left: 6px;
}

.options {
    flex: 1;
    gap: 4px;
    padding-right: 11px;
}

.options .caret, .add-channel .caret {
    margin-left: auto;
}

.options-row .tool-btn {
    width: 32px;
    height: 23px;
}

.add-channel {
    height: 25px;
    gap: 4px;
    padding: 0 5px 0 1px;
    border: 1px solid #2d2d2d;
    border-radius: 3px;
    background: linear-gradient(#595959, #4a4a4a);
}

.pair {
    display: flex;
    gap: 6px;
    padding-left: 4px;
}

.pair .btn {
    width: 85px;
    gap: 7px;
    padding-left: 8px;
}

.pair .wavegens {
    flex: 1;
    gap: 9px;
}

.filters .i-down {
    color: #bdbdbd;
}

/* Status bar */
.status {
    display: flex;
    align-items: center;
    justify-content: flex-end;
    gap: 8px;
    height: 37px;
    padding-right: 24px;
    flex: none;
}

.status .tool-btn {
    height: 28px;
    gap: 4px;
    padding: 0 3px;
    justify-content: flex-start;
}

.status .manual { min-width: 141px; }
.status .device { min-width: 256px; }
.status .clock { min-width: 98px; }
.status .version { min-width: 87px; }

.status .state-ok {
    min-width: 110px;
    justify-content: center;
}
```

FILE: script.js
```
const NS = 'http://www.w3.org/2000/svg';
const T0 = -0.26;      // left edge, ms
const SPAN = 2;        // ms
const BIT = 0.052;     // 19200 baud
const CURSORS = [0.416114, 0.468078];

// 8 data bits LSB first, then parity
const frames = [
    { name: 'W', bits: [1, 1, 1, 0, 1, 0, 1, 0, 1] },
    { name: 'e', bits: [1, 0, 1, 0, 0, 1, 1, 0, 1] },
    { name: 'l', bits: [0, 0, 1, 1, 0, 1, 1, 0, 1] },
    { name: 'ETX', bits: [1, 1, 0, 0, 0, 0, 0, 0, 1] }
];

function add(svg, tag, attrs, text) {
    const el = document.createElementNS(NS, tag);
    for (const key in attrs) el.setAttribute(key, attrs[key]);
    if (text) el.textContent = text;
    svg.appendChild(el);
    return el;
}

function line(svg, x1, y1, x2, y2, color, width, dash) {
    const attrs = { x1, y1, x2, y2, stroke: color, 'stroke-width': width || 1 };
    if (dash) attrs['stroke-dasharray'] = dash;
    return add(svg, 'line', attrs);
}

function tri(svg, points, fill) {
    add(svg, 'polygon', { points, fill });
}

// Level changes of the whole capture as an SVG path
function wavePath(toX, high, low, endX) {
    let d = 'M' + toX(T0) + ' ' + high;
    let level = 1;
    const step = (t, next) => {
        if (next !== level && toX(t) < endX) {
            d += 'H' + toX(t) + 'V' + (next ? high : low);
            level = next;
        }
    };
    frames.forEach((frame, i) => {
        const start = -BIT + i * BIT * 10;
        step(start, 0);
        frame.bits.forEach((bit, n) => step(start + (n + 1) * BIT, bit));
    });
    return d + 'H' + endX;
}

function drawScope() {
    const svg = document.getElementById('scopePlot');
    svg.innerHTML = '';
    const w = svg.clientWidth - 28;
    const h = 276;
    const toX = t => Math.round((t - T0) / SPAN * w);
    const grey = '#808080';
    const mid = h / 2;

    for (let i = 1; i < 10; i++) {
        const y = Math.round(i * h / 10) + 0.5;
        if (i === 5) line(svg, 0, y, w, y, grey, 1, '4 2');
        else line(svg, 0, y, w, y, grey, 1, '1 2');
        line(svg, 0, y, 6, y, grey);
        line(svg, w - 6, y, w, y, grey);
    }
    for (let i = 0; i < 10; i++) {
        const y = Math.round((i + 0.5) * h / 10) + 0.5;
        line(svg, 0, y, 3, y, grey);
        line(svg, w - 3, y, w, y, grey);
    }
    for (let i = 1; i < 100; i++) {
        const x = Math.round(i * w / 100) + 0.5;
        const len = i % 10 === 0 ? 67 : i % 5 === 0 ? 33 : 16;
        line(svg, x, 0, x, len, grey);
        line(svg, x, h - len, x, h, grey);
        if (i % 10 === 0) line(svg, x, len, x, h - len, grey, 1, i === 50 ? '5 3' : '1 2');
    }
    add(svg, 'rect', { x: 0.5, y: 0.5, width: w, height: h, fill: 'none', stroke: grey });

    add(svg, 'path', { d: wavePath(toX, 90, 138, w), fill: 'none', stroke: '#d9b300', 'stroke-width': 2 });
    add(svg, 'path', { d: `M${w} 91H${w + 26}`, stroke: '#d9b300', 'stroke-width': 2 });
    add(svg, 'path', { d: `M${w + 26} 90V138`, stroke: '#d9b300', 'stroke-width': 2, 'stroke-dasharray': '9 3 1 2' });
    add(svg, 'path', { d: `M${w + 7} 139H${w + 27}`, stroke: '#d9b300', 'stroke-width': 2 });

    CURSORS.forEach(t => line(svg, toX(t), 0, toX(t), h, '#b8202a', 3));

    tri(svg, `${toX(0) - 8},0 ${toX(0) + 8},0 ${toX(0)},16`, '#fff');
    tri(svg, `0,${mid - 8} 16,${mid} 0,${mid + 8}`, '#ffd700');
    tri(svg, `${w},111 ${w - 16},119 ${w},127`, '#ffd700');
}

function drawDigital() {
    const svg = document.getElementById('digitalPlot');
    svg.innerHTML = '';
    const offset = 195;
    const end = svg.clientWidth - 11;
    const w = end + offset;
    const toX = t => (t - T0) / SPAN * w - offset;

    add(svg, 'rect', { x: 0, y: 0, width: '100%', height: 33, fill: '#3859c0' });
    add(svg, 'rect', { x: 0, y: 33, width: '100%', height: 33, fill: '#2f4f4f' });
    line(svg, 0, 32.5, svg.clientWidth, 32.5, '#777');
    line(svg, 0, 65.5, svg.clientWidth, 65.5, '#777');

    for (let i = 1; i <= 10; i++) {
        const x = Math.round(toX(T0 + i * 0.2)) + 0.5;
        line(svg, x, 0, x, 66, '#9a9a9a', 1, i === 10 ? '' : i === 5 ? '4 2' : '2 3');
    }

    // Bit boundaries and names
    frames.forEach((frame, i) => {
        const start = -BIT + i * BIT * 10;
        ['S', '0', '1', '2', '3', '4', '5', '6', '7', 'P', ''].forEach((name, n) => {
            const x = Math.round(toX(start + (name ? n : 9.5) * BIT));
            if (x > end) return;
            if (n > 0) line(svg, x, 33, x, 65, '#ff8c00', 2, '10 3');
            if (name) add(svg, 'text', { x: x + 3, y: 56, style: 'fill: #ff8c00' }, name);
        });
    });

    frames.forEach((frame, i) => {
        const start = -BIT + i * BIT * 10;
        const x1 = Math.round(toX(start));
        const x2 = Math.min(Math.round(toX(start + 9.5 * BIT)), end);
        const idleFrom = i === 0 ? 0 : toX(start - BIT / 2);
        line(svg, idleFrom, 16, x1, 16, '#fff', 2);
        line(svg, x1, 3, x2, 3, '#eef2fc', 2);
        line(svg, x1, 29, x2, 29, '#eef2fc', 2);
        line(svg, x1, 2, x1, 30, '#eef2fc', 2);
        if (x2 < end) line(svg, x2, 2, x2, 30, '#eef2fc', 2);
        add(svg, 'text', { x: x1 + 4, y: 22 }, frame.name);
    });

    const snap = t => Math.round(toX(t));
    add(svg, 'path', { d: wavePath(snap, 36, 62, end), fill: 'none', stroke: '#eef3f1', 'stroke-width': 2 });

    CURSORS.forEach(t => line(svg, toX(t), 0, toX(t), 66, '#b8202a', 3));
}

function drawAxis(id, low) {
    const box = document.getElementById(id);
    const svg = box.querySelector('svg');
    svg.innerHTML = '';
    const w = svg.clientWidth;
    const left = low ? 58 : 56;
    const span = w - 85;
    const toX = t => left + (t - T0) / SPAN * span;

    for (let i = 0; i <= 10; i++) {
        const t = T0 + i * 0.2;
        const x = low ? toX(t) - (i < 2 ? 23 : 20) : 42 + i * (w - 98) / 10;
        add(svg, 'text', { x, y: low ? 24 : 20 }, t.toFixed(2) + ' ms');
        if (low) line(svg, Math.round(toX(t)) + 0.5, 0, Math.round(toX(t)) + 0.5, 3, '#9a9a9a');
    }
    box.querySelectorAll('.cursor').forEach(btn => {
        btn.style.left = Math.round(toX(Number(btn.dataset.t)) - 31) + 'px';
    });
    if (low) {
        CURSORS.forEach(t => line(svg, toX(t), 0, toX(t), 5, '#b8202a', 3));
        const x = toX(0) - 2;
        tri(svg, `${x - 8},33 ${x + 8},33 ${x},12`, '#fff');
    }
}

function draw() {
    drawScope();
    drawDigital();
    drawAxis('scopeAxis', false);
    drawAxis('digitalAxis', true);
}

window.addEventListener('resize', draw);
draw();
```
